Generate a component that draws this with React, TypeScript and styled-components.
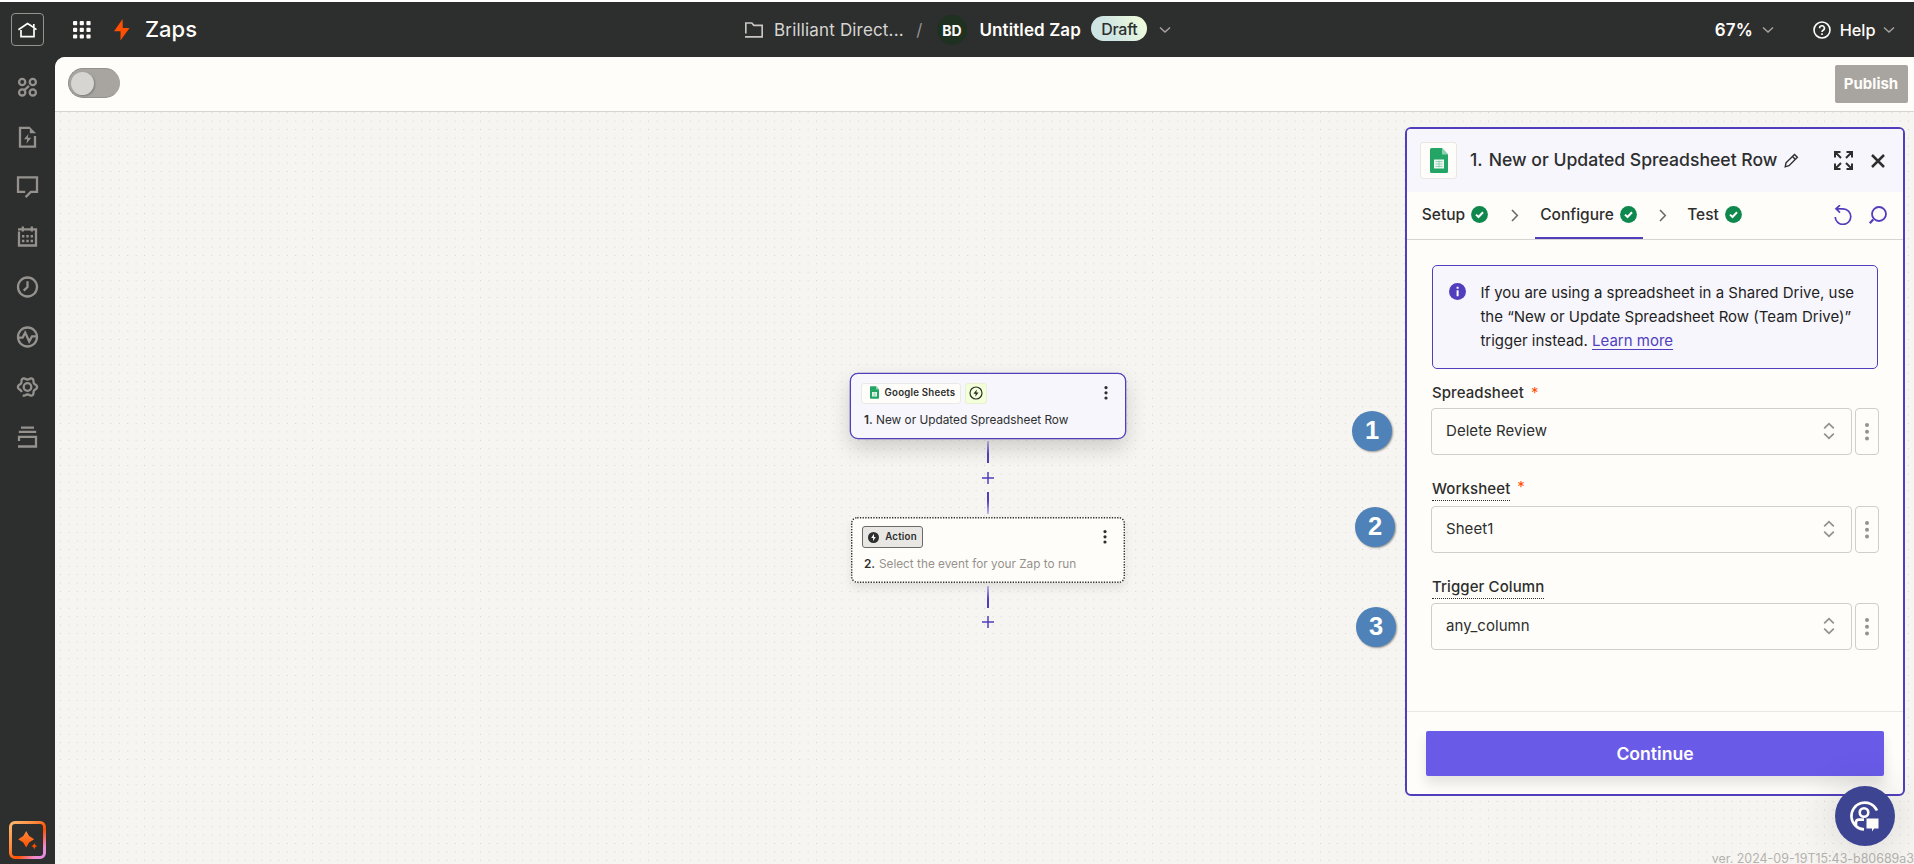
import React from 'react';
import styled, { createGlobalStyle } from 'styled-components';

const ink = '#2d2e2e';
const purple = '#503ebd';
const paper = '#fffdf9';
const lavender = '#f7f6fd';
const line = '#d7d5d2';
const muted = '#95928e';

const GlobalStyle = createGlobalStyle`
  * { box-sizing: border-box; }
  body { margin: 0; background: #fff; font-family: Inter, "Liberation Sans", sans-serif; color: ${ink}; overflow: hidden; }
  svg { display: block; flex: none; }
`;

const Page = styled.div`
  width: 1914px; height: 864px; padding-top: 2px; display: flex; flex-direction: column; overflow: hidden;
`;
const Header = styled.header`
  height: 55px; flex: none; background: ${ink}; display: grid; grid-template-columns: 745px 1fr auto; align-items: center;
`;
const Brand = styled.div`display: flex; align-items: center; padding-left: 11px;`;
const HomeBox = styled.div`
  width: 33px; height: 33px; border: 1px solid #95928e; border-radius: 4px; display: grid; place-items: center; margin-right: 28.5px;
`;
const Label = styled.span<{ $size: number; $weight?: number; $color?: string; $spacing?: number; $ml?: number; $line?: number; $raise?: number }>`
  font-size: ${p => p.$size}px; font-weight: ${p => p.$weight ?? 400}; color: ${p => p.$color ?? 'inherit'};
  letter-spacing: ${p => p.$spacing ?? 0}px; margin-left: ${p => p.$ml ?? 0}px; line-height: ${p => p.$line ?? 20}px; white-space: nowrap;
  padding-bottom: ${p => p.$raise ?? 0}px;
`;
const Crumbs = styled.div`display: flex; align-items: center; padding-top: 1px;`;
const Avatar = styled.div`
  width: 30px; height: 30px; margin: 0 12.5px 0 14.5px; border-radius: 50%; background: #1f3121; color: #fff; font-size: 14px; font-weight: 700;
  display: grid; place-items: center;
`;
const DraftPill = styled.div`
  width: 56px; height: 25px; margin: -3px 12px 0 10.5px; border-radius: 13px; background: linear-gradient(60deg, #cfe5e4 35%, #f3ffd9);
  color: ${ink}; font-size: 16px; font-weight: 450; letter-spacing: -.3px; display: grid; place-items: center;
`;
const HeaderTools = styled.div`display: flex; align-items: center; padding: 1px 19.5px 0 0;`;
const Body = styled.div`flex: 1; display: flex; min-height: 0; background: ${ink};`;
const Sidebar = styled.nav`
  width: 55px; flex: none; display: flex; flex-direction: column; align-items: center; padding-top: 18px;
`;
const SideItem = styled.div`height: 50px; display: flex; align-items: flex-start;`;
const SideBottom = styled.div`margin-top: auto; padding-bottom: 5px;`;
const Workspace = styled.main`
  flex: 1; display: flex; flex-direction: column; min-width: 0; border-top-left-radius: 10px; overflow: hidden; background: #f6f5f1;
`;
const Toolbar = styled.div`
  height: 55px; flex: none; background: ${paper}; border-bottom: 1px solid ${line}; display: flex; align-items: center; justify-content: space-between;
  padding: 0 6px 2px 13px;
`;
const Toggle = styled.div`
  width: 52px; height: 30px; border-radius: 15px; background: #a8a5a0; border: 1px solid #95928e; border-right-color: #a8a5a0; display: flex; align-items: center; padding-left: 2px;
  &::after { content: ''; width: 23px; height: 23px; border-radius: 50%; background: #d7d5d2; box-shadow: 1px 1px 2px rgba(0,0,0,.25); }
`;
const Publish = styled.button`
  width: 73px; height: 38px; margin-top: 1px; padding: 0 1px 0 0; border: 0; border-radius: 2px; background: #a8a5a0; color: ${paper}; font: 700 15px Inter, sans-serif;
`;
const Canvas = styled.section`flex: 1; position: relative; display: flex; min-height: 0; justify-content: flex-end; align-items: flex-start;`;
const Dots = styled.svg`position: absolute; inset: 0; width: 100%; height: 100%;`;
const Flow = styled.div`
  position: absolute; left: 795px; top: 261px; width: 276px; display: flex; flex-direction: column; align-items: center;
`;
const Node = styled.article<{ $selected?: boolean }>`
  position: relative; width: ${p => (p.$selected ? 276 : 274)}px; height: 66px; border-radius: ${p => (p.$selected ? 8 : 6)}px;
  padding: ${p => (p.$selected ? '8px 16px 0 10px' : '9px 17px 0 11px')};
  border: ${p => (p.$selected ? `1.5px solid ${purple}` : '0')};
  background: ${p => (p.$selected ? lavender : paper)};
  box-shadow: ${p => (p.$selected ? `0 0 0 .3px ${purple}, 0 9px 20px rgba(45,46,46,.2)` : '0 5px 8px rgba(45,46,46,.1)')};
`;
const DottedOutline = styled.svg`position: absolute; inset: 0; width: 100%; height: 100%;`;
const NodeTop = styled.div`display: flex; align-items: center; height: 22px;`;
const Chip = styled.div<{ $w: number; $kind: 'app' | 'trigger' | 'action' }>`
  width: ${p => p.$w}px; height: ${p => (p.$kind === 'action' ? 22 : 21)}px; border-radius: 3px; display: flex; align-items: center; justify-content: center; gap: 6px; margin-right: 4px;
  font-size: 9.7px; font-weight: 600; letter-spacing: .2px; white-space: nowrap; line-height: 16px;
  padding: 0 0 ${p => (p.$kind === 'action' ? 0 : 1)}px ${p => (p.$kind === 'app' ? 3 : 0)}px;
  background: ${p => ({ app: paper, trigger: '#f3ffd9', action: '#e8e7e4' }[p.$kind])};
  border: 1px solid ${p => ({ app: '#ebe9e6', trigger: '#e8efd2', action: '#6b6b6a' }[p.$kind])};
`;
const NodeText = styled.p<{ $muted?: boolean }>`
  margin: 8px 0 0 ${p => (p.$muted ? 2 : 3)}px; font-size: 11.8px; line-height: 16px; white-space: nowrap; color: ${p => (p.$muted ? muted : ink)};
  b { font-weight: 600; color: ${ink}; margin-right: ${p => (p.$muted ? 0.5 : 0)}px; }
`;
const Push = styled.div<{ $raise?: number }>`margin-left: auto; padding-bottom: ${p => p.$raise ?? 0}px;`;
const Connector = styled.i<{ $up?: boolean; $mt: number }>`
  width: 2px; height: 22px; margin-top: ${p => p.$mt}px; background: linear-gradient(${p => (p.$up ? 'to top' : 'to bottom')}, #c2bbf0, ${purple} 60%);
`;
const PlusBox = styled.div<{ $mt: number }>`margin-top: ${p => p.$mt}px;`;
const Marker = styled.div<{ $x: number; $y: number }>`
  position: absolute; left: ${p => p.$x - 75}px; top: ${p => p.$y - 132}px; width: 40px; height: 40px; border-radius: 50%; background: #4e82b9; color: #fff;
  box-shadow: 1px 1px 2px rgba(0,0,0,.4); font: 700 25.5px/38px "Liberation Sans", Arial, sans-serif; text-align: center;
`;
const Panel = styled.aside`
  position: relative; width: 500px; height: 669px; margin: 15px 9px 0 0; border: 2px solid ${purple}; border-radius: 6px; background: ${paper};
  display: flex; flex-direction: column; overflow: hidden;
`;
const PanelHead = styled.div`height: 63px; flex: none; background: ${lavender}; display: flex; align-items: center; padding: 0 18px 0 13px;`;
const AppIcon = styled.div`
  width: 37px; height: 37px; border: 1px solid #e8e7e4; border-radius: 3px; background: ${paper}; display: grid; place-items: center; margin-right: 13px;
`;
const Tabs = styled.div`height: 48px; flex: none; border-bottom: 1px solid ${line}; display: flex; align-items: stretch; padding: 0 16px 0 10px;`;
const Tab = styled.div<{ $w: number; $active?: boolean }>`
  width: ${p => p.$w}px; display: flex; align-items: center; justify-content: center; gap: 6px; padding-right: 1px; font-size: 15.5px; font-weight: 500;
  border-bottom: 2px solid ${p => (p.$active ? purple : 'transparent')};
`;
const TabGap = styled.div<{ $w: number }>`width: ${p => p.$w}px; display: grid; place-items: center;`;
const TabTools = styled.div`margin-left: auto; display: flex; align-items: center; gap: 17px; padding-bottom: 2px;`;
const PanelBody = styled.div`flex: 1; padding: 25px 24px 0;`;
const Info = styled.div`
  height: 104px; margin: 0 1px; border: 1px solid ${purple}; border-radius: 5px; background: ${lavender}; display: flex; padding: 15px 0 0 16.4px; gap: 14px;
  font-size: 15px; line-height: 24px; white-space: nowrap; color: #1f1f1f;
  svg { margin-top: 2px; }
  a { color: ${purple}; text-decoration: underline; text-underline-offset: 3px; }
`;
const FieldLabel = styled.div<{ $mt: number; $mb: number; $dotted?: boolean }>`
  margin: ${p => p.$mt}px 0 ${p => p.$mb}px 1px; display: flex; font-size: 15px; letter-spacing: .08px; line-height: 22px; font-weight: 500; height: ${p => (p.$dotted ? 23 : 22)}px;
  span { border-bottom: ${p => (p.$dotted ? `1px dotted ${ink}` : '0')}; }
  em { color: #ff4f00; font-style: normal; margin: ${p => (p.$dotted ? -2 : 0)}px 0 0 7px; font-weight: 400; }
`;
const FieldRow = styled.div`display: flex; gap: 3px; height: 47px;`;
const Select = styled.div`
  width: 421px; border: 1px solid #d0cecb; border-radius: 4px; display: flex; align-items: center; justify-content: space-between; padding: 0 16px 2px 14px; font-size: 15px;
  letter-spacing: .05px;
`;
const More = styled.div`width: 24px; border: 1px solid #d0cecb; border-radius: 4px; display: grid; place-items: center;`;
const PanelFoot = styled.div`height: 83px; flex: none; border-top: 1px solid #e8e7e4; padding: 19px 18px 0 19px;`;
const Continue = styled.button`
  width: 458px; height: 45px; border: 0; border-radius: 2px; background: #695be8; color: ${paper}; font: 600 17.6px Inter, sans-serif;
  box-shadow: 0 8px 12px rgba(45,46,46,.12);
`;
const Chat = styled.div`
  position: absolute; left: 1780px; top: 674px; width: 60px; height: 60px; border-radius: 50%; background: #3d4592; display: grid; place-items: center;
  padding-right: 2px; box-shadow: 0 0 40px rgba(45,46,46,.16);
`;
const Version = styled.div`
  position: absolute; right: 0; bottom: 0; font-size: 12.45px; line-height: 11px; color: #b5b2ae; white-space: nowrap;
`;

const Svg = ({ w, h = w, sw = 2, c = muted, ml = 0, children }: { w: number; h?: number; sw?: number; c?: string; ml?: number; children: React.ReactNode }) => (
  <svg width={w} height={h} viewBox={`0 0 ${w} ${h}`} fill="none" stroke={c} strokeWidth={sw} style={ml ? { marginLeft: ml } : undefined}>{children}</svg>
);
const ChevronDown = ({ ml = 0 }: { ml?: number }) => <Svg w={12} h={8} sw={1.4} c="#a8a5a0" ml={ml}><path d="M1 1.5l5 4.5 5-4.5" /></Svg>;
const ChevronRight = () => <Svg w={8} h={13} sw={1.6} c="#6b6b6a"><path d="M1 1l5.3 5.5L1 12" /></Svg>;
const Check = () => <Svg w={17} sw={2} c="#fff"><circle cx="8.5" cy="8.5" r="8.4" fill="#0f884e" stroke="none" /><path d="M5 8.6l2.5 2.4L12 6.2" /></Svg>;
const Kebab = ({ c = ink, r = 1.6, step = 5.2 }: { c?: string; r?: number; step?: number }) => {
  const h = step * 2 + r * 2 + 2;
  return <Svg w={6} h={h} c="none">{[-1, 0, 1].map(i => <circle key={i} cx="3" cy={h / 2 + i * step} r={r} fill={c} />)}</Svg>;
};
const SheetIcon = ({ w, h }: { w: number; h: number }) => (
  <svg width={w} height={h} viewBox="0 0 18 25">
    <path d="M1.5 0H12l6 6.5v17a1.5 1.5 0 0 1-1.5 1.5h-15A1.5 1.5 0 0 1 0 23.5v-22A1.5 1.5 0 0 1 1.5 0z" fill="#23a566" />
    <path d="M12 0l6 6.5h-6z" fill="#8ed1b1" />
    <path d="M4 11.5h10v9H4z" fill="#f1f8f4" />
    <path d="M5.5 13.6h7M5.5 16h7M5.5 18.4h7M9 12.5v7" stroke="#8ed1b1" />
  </svg>
);
const Updown = () => <Svg w={12} h={18} sw={1.8}><path d="M1.2 6.3L6 1.7l4.8 4.6M1.2 11.7L6 16.3l4.8-4.6" /></Svg>;
const Plus = () => <Svg w={12} sw={1.5} c={purple}><path d="M6 0v12M0 6h12" /></Svg>;
const BOLT = 'M8.6 0L0 12.2h6.6L6.4 21.4 15.6 9H8.8z';

// Six-toothed cog outline, left open by a small notch at its lower left.
const cogPath = Array.from({ length: 86 }, (_, i) => {
  const t = ((140 + i * 4) * Math.PI) / 180;
  const r = 8.5 + 1.1 * Math.cos(6 * t);
  return `${i ? 'L' : 'M'}${(11.5 + r * Math.cos(t)).toFixed(2)} ${(12 + r * Math.sin(t)).toFixed(2)}`;
}).join('');

const sideIcons: React.ReactNode[] = [
  <><circle cx="6.2" cy="7" r="3.1" /><circle cx="16.8" cy="7" r="3.1" /><circle cx="6.2" cy="17.4" r="3.1" /><circle cx="16.8" cy="17.4" r="3.1" /><path d="M8.4 15.2L13 10.8" /></>,
  <><path d="M19 11v10.6H4V2.9h10" /><path d="M13.8 2l6.2 6.2h-6.2z" fill={muted} stroke="none" /><path d="M12.4 9L8 14.2h3.2l-.8 4.6 4.8-6h-3.4z" fill={muted} stroke="none" /></>,
  <path d="M9.2 16.9H2V2.3h19v14.6h-6.2l-5.2 5.2" />,
  <><path d="M3 6.5v14h17V4.3H2M6.8 1.5v5M15.8 1.5v5" /><path d="M6 11.2h2.4M10.3 11.2h2.4M14.6 11.2h2.4M6 16h2.4M10.3 16h2.4M14.6 16h2.4" strokeWidth="2.4" /></>,
  <><circle cx="11.5" cy="12" r="9.5" /><path d="M11.5 6.3v5.8l-3.8 3.5" /></>,
  <><circle cx="11.5" cy="12" r="9.5" /><path d="M2 12.6h4.6l2.6-5 4 8.8 2.8-5h4.6" /></>,
  <><circle cx="11.5" cy="12" r="3.8" /><path d={cogPath} /></>,
  <><path d="M5 2.6h13M2.8 6.8h17.4M3 16v-4.1h17v9.6H2" /></>,
];

const fields = [
  { label: 'Spreadsheet', value: 'Delete Review', required: true, dotted: false, mt: 13, mb: 4 },
  { label: 'Worksheet', value: 'Sheet1', required: true, dotted: true, mt: 23, mb: 5 },
  { label: 'Trigger Column', value: 'any_column', required: false, dotted: true, mt: 23, mb: 4 },
];

export default function App() {
  return (
    <Page>
      <GlobalStyle />
      <Header>
        <Brand>
          <HomeBox><Svg w={21} sw={1.7} c="#fffdf9"><path d="M4 11v6.6h13v-7.8M1.4 10.8L10.5 4.6l4 2.4M12.5 5.6l7 5M16.8 5v4" /></Svg></HomeBox>
          <Svg w={18} c="none">{[0, 1, 2].flatMap(r => [0, 1, 2].map(c => <rect key={`${r}${c}`} x={c * 6.7} y={r * 6.7} width="4.2" height="4.2" rx="1" fill="#fffdf9" />))}</Svg>
          <Svg w={16} h={22} c="none" ml={23.5}><path d={BOLT} fill="#ff4f00" /></Svg>
          <Label $size={22} $weight={500} $color="#fffdf9" $ml={15} $line={26} $raise={2}>Zaps</Label>
        </Brand>
        <Crumbs>
          <Svg w={18} h={16} sw={1.7} c="#c9c6c1"><path d="M.8 11.5V1h6l2 2.4h8.4v11.4H0" /></Svg>
          <Label $size={17} $color="#d7d5d2" $ml={11} $spacing={0.17}>Brilliant Direct...</Label>
          <Label $size={17} $color="#95928e" $ml={12.5}>/</Label>
          <Avatar>BD</Avatar>
          <Label $size={17} $weight={600} $color="#fffdf9" $spacing={0.1}>Untitled Zap</Label>
          <DraftPill>Draft</DraftPill>
          <ChevronDown />
        </Crumbs>
        <HeaderTools>
          <Label $size={17} $weight={600} $color="#fffdf9" $spacing={0.2}>67%</Label>
          <ChevronDown ml={9} />
          <Svg w={18} sw={1.6} c="#fffdf9" ml={38.5}><circle cx="9" cy="9" r="8" /><path d="M6.6 7.2a2.4 2.4 0 1 1 3.6 2c-.8.5-1.2.9-1.2 1.8M9 12.2v1.8" /></Svg>
          <Label $size={16.3} $weight={500} $color="#fffdf9" $ml={9}>Help</Label>
          <ChevronDown ml={7} />
        </HeaderTools>
      </Header>
      <Body>
        <Sidebar>
          {sideIcons.map((icon, i) => <SideItem key={i}><Svg w={23} sw={2.3}>{icon}</Svg></SideItem>)}
          <SideBottom>
            <svg width="37" height="38" viewBox="0 0 37 38">
              <defs>
                <linearGradient id="ai" x1="0" y1="0" x2="1" y2="1"><stop offset="0" stopColor="#ffb770" /><stop offset=".35" stopColor="#ff8a3c" /><stop offset=".6" stopColor="#ff4f00" /><stop offset=".85" stopColor="#f08ad0" /><stop offset="1" stopColor="#e58be8" /></linearGradient>
                <linearGradient id="spark" x1="0" y1="0" x2="0" y2="1"><stop offset="0" stopColor="#ff8a3c" /><stop offset="1" stopColor="#ff4f00" /></linearGradient>
              </defs>
              <rect x="1.5" y="1.5" width="34" height="35" rx="4.5" fill="none" stroke="url(#ai)" strokeWidth="3" />
              <path d="M17.2 10l2.9 5.1 5.1 3.2-5.1 3.2-2.9 5.1-2.9-5.1-5.1-3.2 5.1-3.2z" fill="url(#spark)" />
              <path d="M25.3 22l1 2.2 2 .9-2 .9-1 2.2-1-2.2-2-.9 2-.9z" fill="#ff4f00" />
            </svg>
          </SideBottom>
        </Sidebar>
        <Workspace>
          <Toolbar><Toggle /><Publish>Publish</Publish></Toolbar>
          <Canvas>
            <Dots>
              <defs><pattern id="grid" x="1.3" y="4.9" width="8.4" height="8.4" patternUnits="userSpaceOnUse"><circle cx="4.2" cy="4.2" r=".5" fill="#cbc9c5" /></pattern></defs>
              <rect width="100%" height="100%" fill="url(#grid)" />
            </Dots>
            <Flow>
              <Node $selected>
                <NodeTop>
                  <Chip $w={100} $kind="app"><SheetIcon w={9} h={13} />Google Sheets</Chip>
                  <Chip $w={22} $kind="trigger"><Svg w={14} sw={1.2} c={ink}><circle cx="7" cy="7" r="6" /><path d="M7.8 3.4L4.4 7.7h2.3l-.4 3 3.3-4.2H7.4z" fill={ink} stroke="none" /></Svg></Chip>
                  <Push $raise={1}><Kebab /></Push>
                </NodeTop>
                <NodeText><b>1.</b> New or Updated Spreadsheet Row</NodeText>
              </Node>
              <Connector $mt={2} /><PlusBox $mt={9}><Plus /></PlusBox><Connector $mt={8} $up />
              <PlusBox $mt={3}>
                <Node>
                  <DottedOutline><rect x=".7" y=".7" width="272.6" height="64.6" rx="5.5" fill="none" stroke={ink} strokeWidth="1.4" strokeDasharray="1.34 1.34" /></DottedOutline>
                  <NodeTop>
                    <Chip $w={61} $kind="action"><Svg w={11} c="none"><circle cx="5.5" cy="5.5" r="5.5" fill={ink} /><path d="M6 1.8L3.2 6h2l-.3 3.2L7.8 5H6z" fill="#fff" /></Svg>Action</Chip>
                    <Push $raise={1}><Kebab /></Push>
                  </NodeTop>
                  <NodeText $muted><b>2.</b> Select the event for your Zap to run</NodeText>
                </Node>
              </PlusBox>
              <Connector $mt={3} /><PlusBox $mt={8}><Plus /></PlusBox>
            </Flow>
            <Marker $x={1372} $y={431}>1</Marker>
            <Marker $x={1375} $y={527}>2</Marker>
            <Marker $x={1376} $y={627}>3</Marker>
            <Panel>
              <PanelHead>
                <AppIcon><SheetIcon w={18} h={25} /></AppIcon>
                <Label $size={17.6} $weight={500} $line={24} $raise={2}>1.</Label>
                <Label $size={17.6} $weight={500} $ml={6} $line={24} $raise={2}>New or Updated Spreadsheet Row</Label>
                <Svg w={15} sw={1.4} c={ink} ml={7}><path d="M1.2 13.8l.8-4L10.5 1.4l2.9 2.9-8.4 8.4zM8.5 3.5l2.9 2.9" /></Svg>
                <Push><Svg w={19} sw={2} c={ink}><path d="M1 6.5V1h5.5M1 1l6 6M12.5 1H18v5.5M18 1l-6 6M1 12.5V18h5.5M1 18l6-6M18 12.5V18h-5.5M18 18l-6-6" /></Svg></Push>
                <Svg w={14} sw={2.5} c={ink} ml={18}><path d="M1 1l12 12M13 1L1 13" /></Svg>
              </PanelHead>
              <Tabs>
                <Tab $w={77}>Setup<Check /></Tab>
                <TabGap $w={41}><ChevronRight /></TabGap>
                <Tab $w={108} $active>Configure<Check /></Tab>
                <TabGap $w={40}><ChevronRight /></TabGap>
                <Tab $w={64}>Test<Check /></Tab>
                <TabTools>
                  <Svg w={18} h={20} sw={1.7} c={purple}><path d="M1.2 12a7.8 7.8 0 1 0 7.9-8.2H2M6 .2L2 3.8l4 3.8" /></Svg>
                  <Svg w={18} h={18} sw={1.8} c={purple}><circle cx="10" cy="8" r="7" /><path d="M.8 17.2l3.4-3.6" strokeWidth="2.2" /></Svg>
                </TabTools>
              </Tabs>
              <PanelBody>
                <Info>
                  <Svg w={17} c="none"><circle cx="8.5" cy="8.5" r="8.5" fill={purple} /><path d="M7.6 7.2h2v6h-2zM7.6 3.8h2v2h-2z" fill="#fff" /></Svg>
                  <div>If you are using a spreadsheet in a Shared Drive, use<br />the “New or Update Spreadsheet Row (Team Drive)”<br />trigger instead. <a>Learn more</a></div>
                </Info>
                {fields.map(f => (
                  <React.Fragment key={f.label}>
                    <FieldLabel $mt={f.mt} $mb={f.mb} $dotted={f.dotted}><span>{f.label}</span>{f.required && <em>*</em>}</FieldLabel>
                    <FieldRow><Select>{f.value}<Updown /></Select><More><Kebab c={muted} r={2} step={6.7} /></More></FieldRow>
                  </React.Fragment>
                ))}
              </PanelBody>
              <PanelFoot><Continue>Continue</Continue></PanelFoot>
            </Panel>
            <Version>ver. 2024-09-19T15:43-b80689a3</Version>
            <Chat>
              <Svg w={32} sw={2.6} c="#fffdf9"><path d="M29 10.5A13.4 13.4 0 1 0 16 29.4M8 25v-3.2a3 3 0 0 1 3-2.2h5" /><circle cx="16" cy="12.5" r="4.3" /><path d="M18.5 18.5h12v10h-4.4L24 31.5v-3h-5.5z" fill="#fffdf9" stroke="none" /></Svg>
            </Chat>
          </Canvas>
        </Workspace>
      </Body>
    </Page>
  );
}
